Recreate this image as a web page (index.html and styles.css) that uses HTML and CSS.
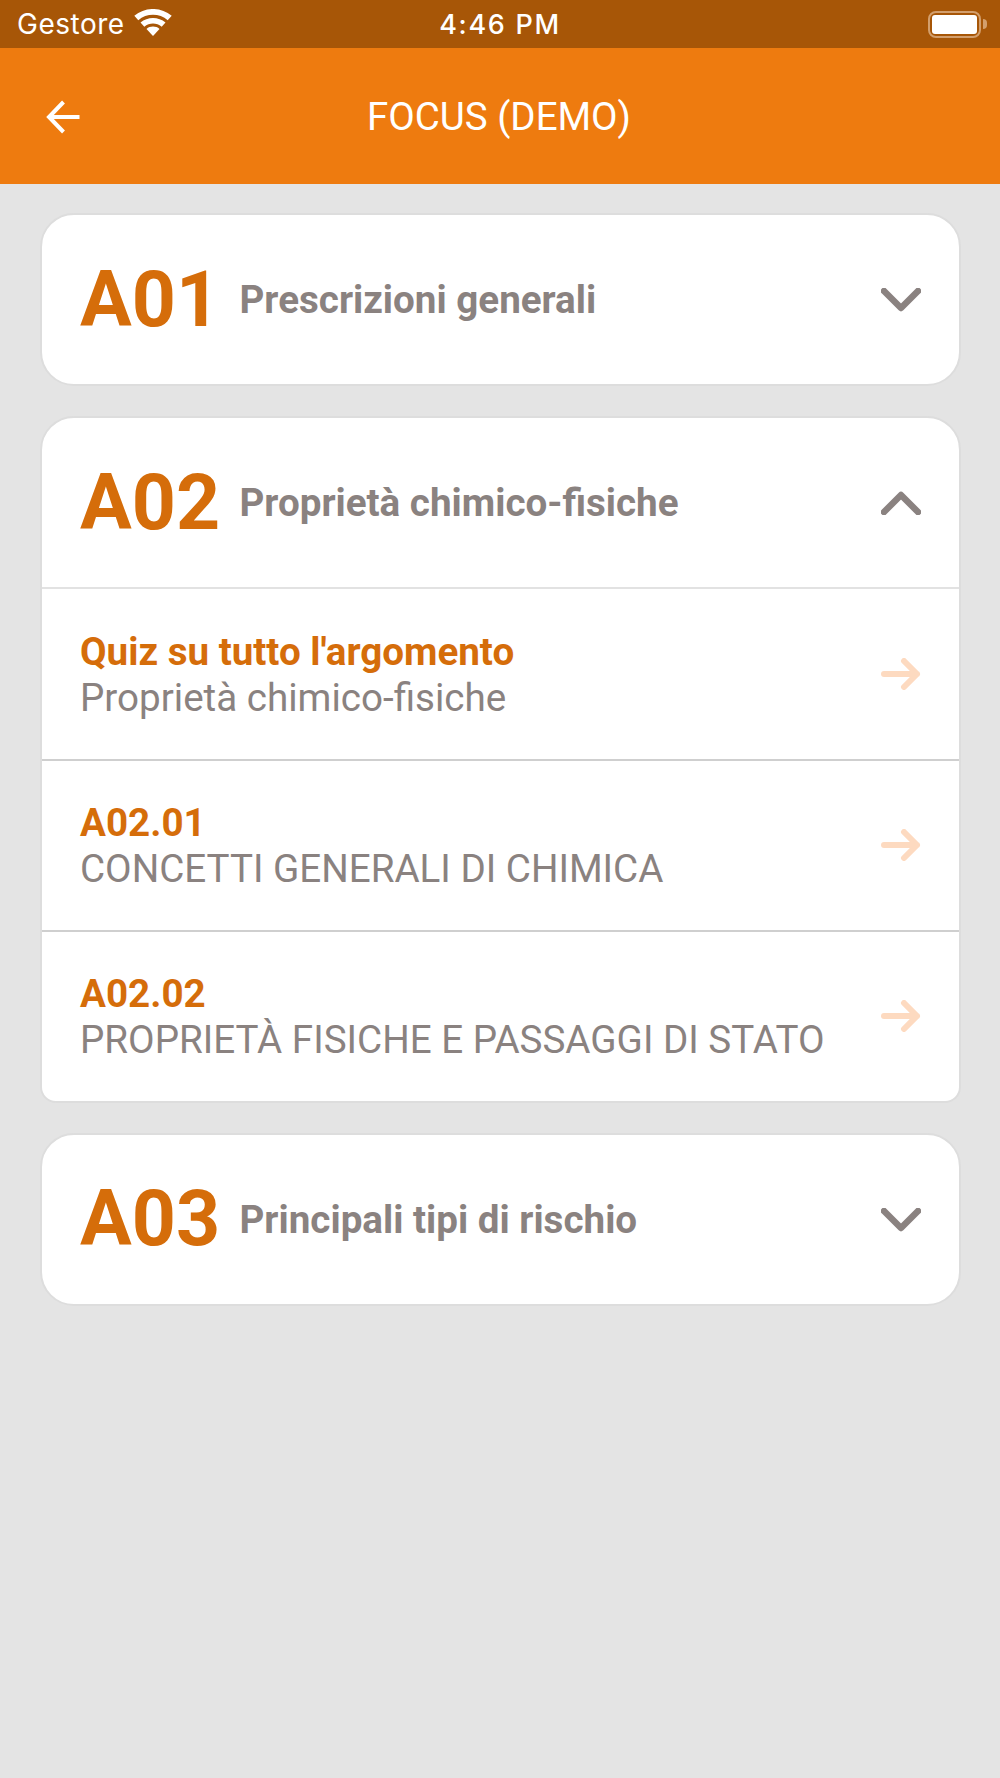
FILE: index.html
```html
<!DOCTYPE html>
<html lang="it">
<head>
<meta charset="utf-8">
<title>Focus (Demo)</title>
<link rel="stylesheet" href="styles.css">
</head>
<body>
<div class="status">
  <div class="status-left">
    <span>Gestore</span>
    <svg class="wifi" viewBox="0 0 38 27"><path d="M19 27 12.500 20C16 16.800 22 16.800 25.500 20Z"/><path d="M10.300 17.700 6.500 13.500C13.500 7.500 24.500 7.500 31.500 13.500L27.700 17.700C22.500 13.300 15.500 13.300 10.300 17.700Z"/><path d="M4.300 11.200 0.300 6.800C11 -2.300 27 -2.300 37.700 6.800L33.700 11.200C25.500 4 12.500 4 4.300 11.200Z"/></svg>
  </div>
  <div class="status-time">4:46 PM</div>
  <div class="status-right">
    <div class="battery"><div class="battery-fill"></div></div>
    <div class="battery-tip"></div>
  </div>
</div>
<header class="appbar">
  <svg class="back" viewBox="0 0 34 34"><path d="M33 17H3M17 2 2.500 17 17 32"/></svg>
  <h1 class="title">FOCUS (DEMO)</h1>
</header>
<main class="list">
  <section class="card">
    <div class="head">
      <span class="code">A01</span>
      <span class="name">Prescrizioni generali</span>
      <svg class="chev down" viewBox="0 0 40 24"><path d="M3 3 20 20 37 3"/></svg>
    </div>
  </section>
  <section class="card open">
    <div class="head">
      <span class="code">A02</span>
      <span class="name">Proprietà chimico-fisiche</span>
      <svg class="chev" viewBox="0 0 40 24"><path d="M3 21 20 4 37 21"/></svg>
    </div>
    <div class="row first">
      <div class="row-text"><div class="row-quiz">Quiz su tutto l'argomento</div><div class="row-sub">Proprietà chimico-fisiche</div></div>
      <svg class="go" viewBox="0 0 40 32"><path d="M3 16H36M23 3 36 16 23 29"/></svg>
    </div>
    <div class="row">
      <div class="row-text"><div class="row-id">A02.01</div><div class="row-sub">CONCETTI GENERALI DI CHIMICA</div></div>
      <svg class="go" viewBox="0 0 40 32"><path d="M3 16H36M23 3 36 16 23 29"/></svg>
    </div>
    <div class="row last">
      <div class="row-text"><div class="row-id">A02.02</div><div class="row-sub">PROPRIETÀ FISICHE E PASSAGGI DI STATO</div></div>
      <svg class="go" viewBox="0 0 40 32"><path d="M3 16H36M23 3 36 16 23 29"/></svg>
    </div>
  </section>
  <section class="card">
    <div class="head">
      <span class="code">A03</span>
      <span class="name">Principali tipi di rischio</span>
      <svg class="chev down" viewBox="0 0 40 24"><path d="M3 3 20 20 37 3"/></svg>
    </div>
  </section>
</main>
</body>
</html>
```
FILE: styles.css
```css
* { box-sizing: border-box; }
html, body { margin: 0; padding: 0; }
body {
  width: 1000px;
  height: 1778px;
  background: #e4e4e4;
  font-family: Roboto, "Liberation Sans", sans-serif;
  overflow: hidden;
}
.status {
  height: 48px;
  background: #a75607;
  color: #fff;
  display: grid;
  grid-template-columns: 1fr auto 1fr;
  align-items: center;
  padding: 0 13px 0 17px;
}
.status-left {
  display: flex;
  align-items: center;
  gap: 9px;
  font-family: Inter, sans-serif;
  font-size: 28px;
  letter-spacing: 0.500px;
}
.wifi { width: 38px; height: 27px; fill: #fff; margin-top: -3px; }
.status-time {
  font-family: Inter, sans-serif;
  font-size: 27px;
  font-weight: 500;
  letter-spacing: 1.700px;
  padding-right: 4px;
}
.status-right { display: flex; align-items: center; justify-content: flex-end; gap: 2px; }
.battery {
  width: 53px;
  height: 27px;
  border: 2px solid #d39f6d;
  border-radius: 8px;
  padding: 2px;
}
.battery-fill { height: 100%; background: #fff; border-radius: 3px; }
.battery-tip {
  width: 4px;
  height: 10px;
  background: #d39f6d;
  border-radius: 0 5px 5px 0;
}
.appbar {
  height: 135.500px;
  background: #ee7b0f;
  color: #fff;
  position: relative;
  display: flex;
  align-items: center;
  justify-content: center;
  padding: 2px 2px 0 0;
}
.back {
  position: absolute;
  left: 46px;
  top: 52px;
  width: 35px;
  height: 34px;
  fill: none;
  stroke: #fff;
  stroke-width: 4;
}
.title { margin: 0; font-size: 38.500px; font-weight: 400; }
.list {
  padding: 29.500px 39.500px 0;
  display: flex;
  flex-direction: column;
  gap: 30px;
}
.card {
  background: #fff;
  border: 2px solid #dddddd;
  border-radius: 34px;
}
.card.open {
  border-radius: 34px 34px 16px 16px;
}
.head {
  height: 169px;
  padding: 0 38px 0 38.500px;
  display: flex;
  align-items: center;
}
.code {
  width: 159.500px;
  flex: none;
  color: #d56d0a;
  font-size: 77px;
  font-weight: 700;
}
.name {
  flex: 1;
  color: #8a8280;
  font-size: 38.600px;
  font-weight: 700;
}
.chev {
  width: 40px;
  height: 24px;
  fill: none;
  stroke: #8a8280;
  stroke-width: 6.500;
  stroke-linecap: round;
  stroke-linejoin: round;
}
.chev.down { margin-top: 1px; }
.row {
  height: 171.500px;
  border-top: 2px solid #cfcfcf;
  padding: 2px 38px 0 38.500px;
  display: flex;
  align-items: center;
}
.row.first { border-top-color: #e2e2e2; }
.row.last { height: 170.500px; }
.row-text { flex: 1; }
.row-quiz, .row-id {
  color: #d56d0a;
  font-size: 38.600px;
  font-weight: 700;
  line-height: 46px;
}
.row-sub {
  color: #8a8280;
  font-size: 38.600px;
  line-height: 46px;
}
.go {
  width: 40px;
  height: 32px;
  margin-top: -2px;
  fill: none;
  stroke: #fddac0;
  stroke-width: 6;
  stroke-linecap: round;
  stroke-linejoin: round;
}
```
